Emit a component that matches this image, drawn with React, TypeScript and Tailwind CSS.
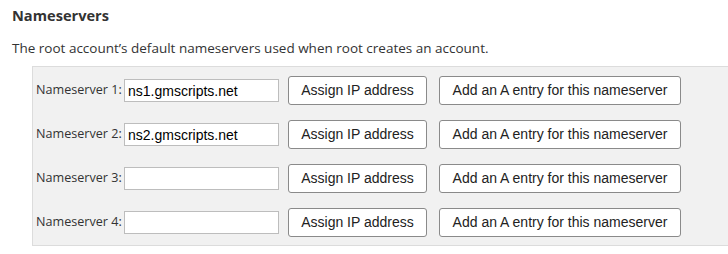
import React from 'react';

const rows = [
  { n: 1, value: 'ns1.gmscripts.net' },
  { n: 2, value: 'ns2.gmscripts.net' },
  { n: 3, value: '' },
  { n: 4, value: '' },
];

export default function App() {
  return (
    <div className="w-[728px] h-[254px] overflow-hidden bg-white pl-3 font-['Open_Sans',sans-serif] text-[#333]">
      <h2 className="pt-[5px] text-[14.6px] font-bold leading-[20px]">Nameservers</h2>
      <p className="mt-[14px] text-[13.5px] leading-[18px]">
        The root account’s default nameservers used when root creates an account.
      </p>

      {/* Panel */}
      <div className="ml-5 mt-[9px] w-[720px] border border-[#dcdcdc] bg-[#f1f1f1] pt-[9px] pb-[8px] pl-[3px]">
        <div className="flex flex-col gap-[15px]">
          {rows.map(row => (
            <div key={row.n} className="flex h-[29px] items-center">
              <label className="w-[88px] text-[12.6px] text-[#333]">Nameserver {row.n}:</label>
              <input
                readOnly
                defaultValue={row.value}
                className="h-[23px] w-[155px] border border-[#bdbdbd] bg-white px-[3px] font-['Liberation_Sans',Arial,sans-serif] text-[14px] text-black outline-none"
              />
              <button className="ml-[9px] h-[29px] w-[139px] rounded-[3px] border border-[#8a8a8a] bg-white font-['Liberation_Sans',Arial,sans-serif] text-[14px] text-[#222]">
                Assign IP address
              </button>
              <button className="ml-[12px] h-[29px] w-[242px] rounded-[3px] border border-[#8a8a8a] bg-white font-['Liberation_Sans',Arial,sans-serif] text-[14px] text-[#222]">
                Add an A entry for this nameserver
              </button>
            </div>
          ))}
        </div>
      </div>
    </div>
  );
}
